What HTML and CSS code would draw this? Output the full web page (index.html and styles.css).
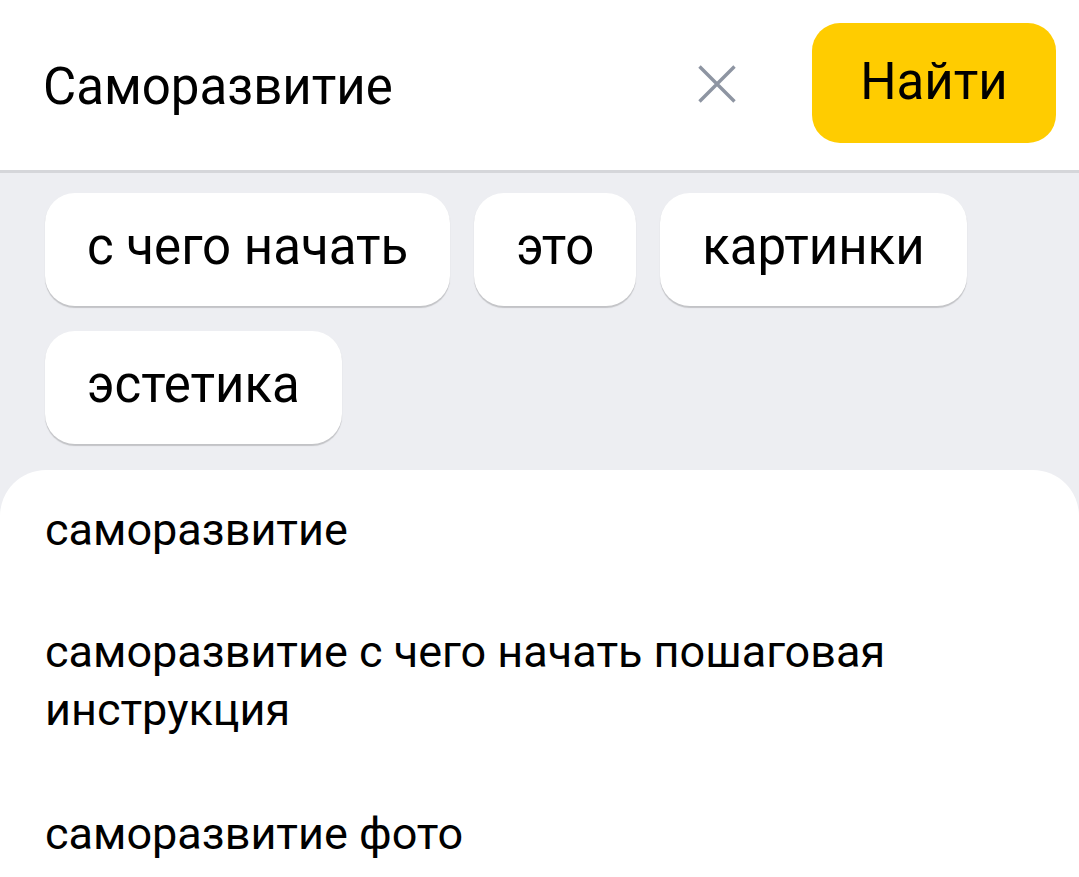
FILE: index.html
```html
<!DOCTYPE html>
<html lang="ru">
<head>
<meta charset="utf-8">
<title>Поиск</title>
<link rel="stylesheet" href="styles.css">
</head>
<body>
<header class="header">
  <div class="query">Саморазвитие</div>
  <button class="clear" aria-label="Очистить">
    <svg width="38" height="38" viewBox="0 0 38 38"><path d="M1.5 1.5L36.5 36.5M36.5 1.5L1.5 36.5" stroke="#8e95a2" stroke-width="3.4" fill="none"/></svg>
  </button>
  <button class="find">Найти</button>
</header>
<section class="chips">
  <span class="chip">с чего начать</span>
  <span class="chip">это</span>
  <span class="chip">картинки</span>
  <span class="chip">эстетика</span>
</section>
<section class="panel">
  <div class="item">саморазвитие</div>
  <div class="item">саморазвитие с чего начать пошаговая инструкция</div>
  <div class="item">саморазвитие фото</div>
</section>
</body>
</html>
```

FILE: styles.css
```css
html, body {
  margin: 0;
  padding: 0;
  background: #edeef2;
  font-family: Roboto, "Noto Sans", sans-serif;
  color: #000;
}
.header {
  height: 173px;
  box-sizing: border-box;
  background: #fff;
  border-bottom: 3px solid #d5d6da;
  display: flex;
  align-items: center;
  padding: 0 23px 0 43px;
}
.query {
  flex: 1;
  font-size: 51px;
  line-height: 1;
  padding-top: 2px;
}
.clear {
  border: 0;
  background: none;
  padding: 0;
  width: 38px;
  height: 38px;
  margin-right: 76px;
  margin-bottom: 2px;
  display: block;
}
.clear svg { display: block; }
.find {
  width: 244px;
  height: 120px;
  margin-bottom: 4px;
  border: 0;
  border-radius: 28px;
  background: #ffcc00;
  font-family: inherit;
  font-size: 51px;
  color: #000;
  padding: 0 0 4px;
}
.chips {
  display: flex;
  flex-wrap: wrap;
  gap: 25px 24px;
  padding: 20px 45px 26px;
}
.chip {
  height: 113px;
  box-sizing: border-box;
  display: flex;
  align-items: center;
  padding: 0 42px 6px;
  background: #fff;
  border-radius: 30px;
  box-shadow: 0 1.5px 1px rgba(0, 0, 0, 0.18);
  font-size: 51px;
}
.panel {
  background: #fff;
  border-radius: 46px 46px 0 0;
  padding: 0 45px;
  min-height: 420px;
}
.item {
  font-size: 45px;
  line-height: 58px;
  padding: 31px 0 33px;
}
.item + .item + .item {
  padding-top: 33px;
}
```
